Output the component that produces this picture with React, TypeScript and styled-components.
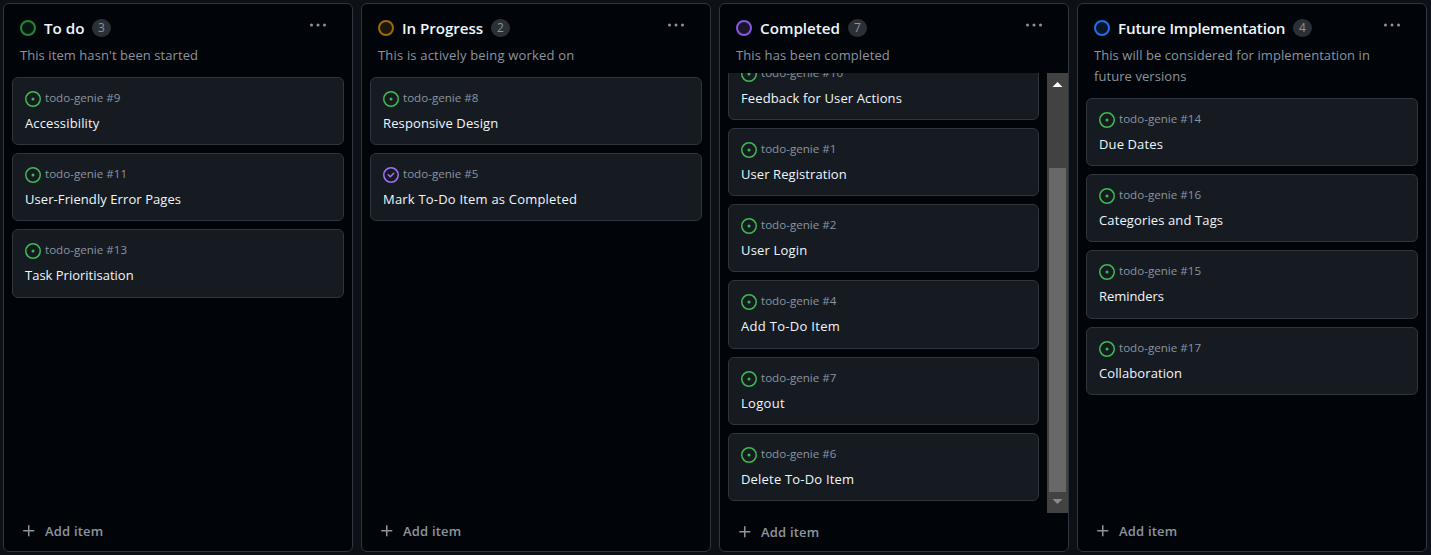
import React from "react";
import styled, { createGlobalStyle } from "styled-components";

const GlobalStyle = createGlobalStyle`
  * { box-sizing: border-box; }
  html, body { margin: 0; background: #0d1117; }
  body {
    font-family: "Open Sans", "Noto Sans", sans-serif;
    color: #f0f6fc;
    overflow: hidden;
  }
`;

const Board = styled.main`
  display: flex;
  gap: 8px;
  height: 555px;
  padding: 3px 3px 3px;
`;

const ColumnBox = styled.section`
  display: flex;
  flex-direction: column;
  flex: none;
  width: 350px;
  height: 549px;
  background: #010409;
  border: 1px solid #30363d;
  border-radius: 6px;
  overflow: hidden;
`;

const Header = styled.header`
  padding: 14px 16px 0;
`;

const TitleRow = styled.div`
  display: flex;
  align-items: center;
  height: 20px;
`;

const StatusRing = styled.span<{ $ring: string; $fill: string }>`
  flex: none;
  width: 16px;
  height: 16px;
  border: 2px solid ${(p) => p.$ring};
  border-radius: 50%;
  background: ${(p) => p.$fill};
`;

const Title = styled.h2<{ $width: number; $spacing: number }>`
  margin: 0 8px;
  width: ${(p) => p.$width}px;
  font-size: 15.2px;
  font-weight: 600;
  line-height: 20px;
  letter-spacing: ${(p) => p.$spacing}px;
  white-space: nowrap;
`;

const Count = styled.span`
  width: 19px;
  height: 18px;
  border-radius: 9px;
  background: #2b3036;
  color: #8b949e;
  font-size: 12px;
  font-weight: 500;
  line-height: 18px;
  text-align: center;
`;

const MenuButton = styled.button`
  display: flex;
  margin: -6px 8px 0 auto;
  padding: 0;
  border: 0;
  background: none;
  color: #8b949e;
`;

const Description = styled.p<{ $spacing: number }>`
  margin: 7px 24px 0 0;
  color: #8b949e;
  font-size: 13px;
  line-height: 21px;
  letter-spacing: ${(p) => p.$spacing}px;
`;

const ListArea = styled.div`
  display: flex;
  flex: 1;
  min-height: 0;
  margin-top: 7px;
  overflow: hidden;
`;

const CardList = styled.div<{ $shift: number }>`
  display: flex;
  flex: 1;
  flex-direction: column;
  gap: 8px;
  margin-top: ${(p) => p.$shift}px;
  padding: 4px 8px 0;
`;

const CardBox = styled.article`
  flex: none;
  height: 68.2px;
  padding: 10px 12px 0;
  background: #161b22;
  border: 1px solid #30363d;
  border-radius: 6px;
`;

const IssueRow = styled.div`
  display: flex;
  gap: 4px;
  height: 20px;
`;

const IssueIcon = styled.svg`
  flex: none;
  margin-top: 3px;
`;

const IssueRef = styled.span`
  color: #8b949e;
  font-size: 11.6px;
  line-height: 19px;
  white-space: nowrap;
`;

const CardTitle = styled.h3<{ $spacing: number }>`
  margin: 5px 0 0;
  font-size: 13px;
  font-weight: 400;
  line-height: 20px;
  letter-spacing: ${(p) => p.$spacing}px;
  white-space: nowrap;
`;

const Scrollbar = styled.div`
  display: flex;
  flex-direction: column;
  align-items: center;
  justify-content: space-between;
  flex: none;
  width: 21px;
  background: #424242;
`;

const ScrollTrack = styled.div`
  flex: 1;
  width: 17px;
  padding-top: 74px;
`;

const ScrollThumb = styled.div`
  height: 100%;
  background: #686868;
`;

const AddButton = styled.button<{ $height: number }>`
  display: flex;
  align-items: center;
  gap: 8px;
  flex: none;
  height: ${(p) => p.$height}px;
  padding: 0 17px;
  border: 0;
  background: none;
  color: #8b949e;
  font-family: inherit;
  font-size: 13px;
  font-weight: 600;
  letter-spacing: 0.2px;
`;

type Item = { id: number; title: string; done?: boolean; spacing?: number };
type ColumnData = {
  name: string;
  nameWidth: number;
  nameSpacing?: number;
  count: number;
  description: string;
  descriptionSpacing?: number;
  ring: string;
  fill: string;
  items: Item[];
  scrolled?: boolean;
};

const columns: ColumnData[] = [
  {
    name: "To do", nameWidth: 40, count: 3, description: "This item hasn't been started",
    descriptionSpacing: 0.07, ring: "#238636", fill: "#05170f",
    items: [
      { id: 9, title: "Accessibility", spacing: 0.14 },
      { id: 11, title: "User-Friendly Error Pages", spacing: 0.08 },
      { id: 13, title: "Task Prioritisation" },
    ],
  },
  {
    name: "In Progress", nameWidth: 81, nameSpacing: -0.08, count: 2,
    description: "This is actively being worked on",
    descriptionSpacing: 0.18, ring: "#9e6a03", fill: "#1d160b",
    items: [
      { id: 8, title: "Responsive Design", spacing: 0.13 },
      { id: 5, title: "Mark To-Do Item as Completed", done: true, spacing: 0.2 },
    ],
  },
  {
    name: "Completed", nameWidth: 80, count: 7, description: "This has been completed",
    descriptionSpacing: 0.12, ring: "#8957e5", fill: "#19152a", scrolled: true,
    items: [
      { id: 10, title: "Feedback for User Actions", spacing: 0.13 },
      { id: 1, title: "User Registration", spacing: 0.08 },
      { id: 2, title: "User Login", spacing: 0.18 },
      { id: 4, title: "Add To-Do Item", spacing: 0.3 },
      { id: 7, title: "Logout", spacing: 0.3 },
      { id: 6, title: "Delete To-Do Item", spacing: 0.19 },
    ],
  },
  {
    name: "Future Implementation", nameWidth: 167, nameSpacing: -0.18, count: 4,
    description: "This will be considered for implementation in future versions",
    descriptionSpacing: 0.07, ring: "#1f6feb", fill: "#07152a",
    items: [
      { id: 14, title: "Due Dates", spacing: 0.12 },
      { id: 16, title: "Categories and Tags", spacing: 0.12 },
      { id: 15, title: "Reminders", spacing: -0.06 },
      { id: 17, title: "Collaboration", spacing: 0.1 },
    ],
  },
];

const Card = ({ item }: { item: Item }) => (
  <CardBox>
    <IssueRow>
      <IssueIcon width="16" height="16" viewBox="0 0 16 16" fill={item.done ? "#a371f7" : "#3fb950"}>
        {item.done ? (
          <>
            <path d="M11.28 6.78a.75.75 0 0 0-1.06-1.06L7.25 8.69 5.78 7.22a.75.75 0 0 0-1.06 1.06l2 2a.75.75 0 0 0 1.06 0l3.5-3.5Z" />
            <path d="M16 8A8 8 0 1 1 0 8a8 8 0 0 1 16 0Zm-1.5 0a6.5 6.5 0 1 0-13 0 6.5 6.5 0 0 0 13 0Z" />
          </>
        ) : (
          <>
            <path d="M8 9.5a1.5 1.5 0 1 0 0-3 1.5 1.5 0 0 0 0 3Z" />
            <path d="M8 0a8 8 0 1 1 0 16A8 8 0 0 1 8 0ZM1.5 8a6.5 6.5 0 1 0 13 0 6.5 6.5 0 0 0-13 0Z" />
          </>
        )}
      </IssueIcon>
      <IssueRef>todo-genie #{item.id}</IssueRef>
    </IssueRow>
    <CardTitle $spacing={item.spacing ?? 0}>{item.title}</CardTitle>
  </CardBox>
);

const Column = ({ data }: { data: ColumnData }) => (
  <ColumnBox>
    <Header>
      <TitleRow>
        <StatusRing $ring={data.ring} $fill={data.fill} />
        <Title $width={data.nameWidth} $spacing={data.nameSpacing ?? 0}>{data.name}</Title>
        <Count>{data.count}</Count>
        <MenuButton aria-label="Column menu">
          <svg width="20" height="16" viewBox="0 0 20 16" fill="currentColor">
            <circle cx="3.5" cy="8" r="1.5" />
            <circle cx="10" cy="8" r="1.5" />
            <circle cx="16.5" cy="8" r="1.5" />
          </svg>
        </MenuButton>
      </TitleRow>
      <Description $spacing={data.descriptionSpacing ?? 0}>{data.description}</Description>
    </Header>
    <ListArea>
      <CardList $shift={data.scrolled ? -25.2 : 0}>
        {data.items.map((item) => <Card key={item.id} item={item} />)}
      </CardList>
      {data.scrolled && (
        <Scrollbar>
          <svg width="21" height="21" viewBox="0 0 21 21"><path d="M5.5 14 10.5 9l5 5Z" fill="#fff" /></svg>
          <ScrollTrack><ScrollThumb /></ScrollTrack>
          <svg width="21" height="21" viewBox="0 0 21 21"><path d="m5.5 7 5 5 5-5Z" fill="#8a8a8a" /></svg>
        </Scrollbar>
      )}
    </ListArea>
    <AddButton $height={data.scrolled ? 38 : 40}>
      <svg width="16" height="16" viewBox="0 0 16 16" fill="currentColor">
        <path d="M7.75 2a.75.75 0 0 1 .75.75V7h4.25a.75.75 0 0 1 0 1.5H8.5v4.25a.75.75 0 0 1-1.5 0V8.5H2.75a.75.75 0 0 1 0-1.5H7V2.75A.75.75 0 0 1 7.75 2Z" />
      </svg>
      Add item
    </AddButton>
  </ColumnBox>
);

export default function App() {
  return (
    <>
      <GlobalStyle />
      <Board>
        {columns.map((column) => <Column key={column.name} data={column} />)}
      </Board>
    </>
  );
}
